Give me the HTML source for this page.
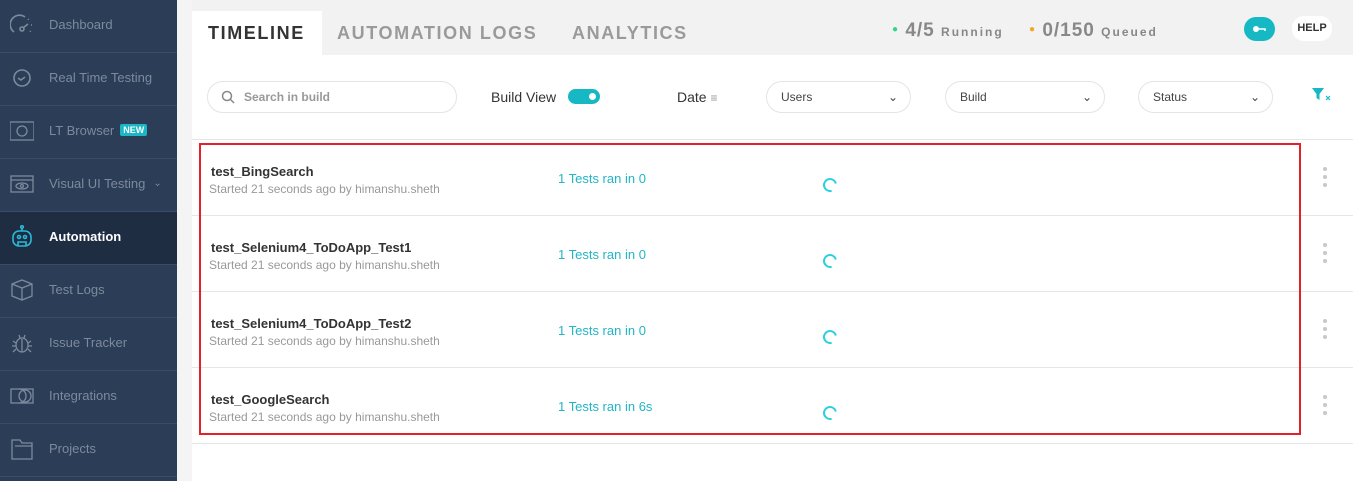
<!DOCTYPE html>
<html><head><meta charset="utf-8"><style>
*{box-sizing:border-box;margin:0;padding:0}
body{width:1353px;height:481px;overflow:hidden;font-family:"Liberation Sans",sans-serif;background:#f4f4f4;position:relative}
.sb{position:absolute;left:0;top:0;width:177px;height:481px;background:#2b3d57}
.it{position:absolute;left:0;width:177px;height:53px;border-bottom:1px solid #3b4d66;color:#7d8a9c;font-size:13px;display:flex;align-items:center;padding-left:49px;padding-bottom:4px}
.it.act{background:#1f2d43;color:#fff;font-weight:bold}
.ic{position:absolute;left:10px;top:13px;width:24px;height:24px}
.new{background:#1ab7c7;color:#fff;font-size:9px;font-weight:bold;padding:1px 3px;border-radius:2px;margin-left:6px}
.main{position:absolute;left:192px;top:0;right:0;height:481px;background:#fff}
.top{position:absolute;left:0;top:0;right:0;height:55px;background:#f2f2f2}
.tab{position:absolute;top:11px;height:44px;font-size:18px;font-weight:bold;letter-spacing:1.6px;color:#9a9a9a;line-height:44px}
.pill{position:absolute;top:81px;height:32px;border:1px solid #e4e4e4;border-radius:16px;font-size:12px;color:#444;line-height:30px;padding-left:14px}
.pill .ch{position:absolute;right:12px;top:0;font-size:12px}
.row{position:absolute;left:0;right:0;height:76px;border-bottom:1px solid #e6e6e6}
.nm{position:absolute;left:19px;top:24px;font-size:13px;color:#333;font-weight:bold}
.sub{position:absolute;left:17px;top:42px;font-size:12px;color:#999}
.ran{position:absolute;left:366px;top:31px;font-size:13px;color:#22b5c6}
.sp{position:absolute;left:631px;top:38px;width:14px;height:14px;border:2px solid #2ad0e0;border-radius:50%;border-right-color:transparent;transform:rotate(30deg)}
.kb{position:absolute;left:1131px;top:27px;width:4px}
.kb i{display:block;width:4px;height:4px;border-radius:2px;background:#c8c8c8;margin-bottom:4px}
</style></head><body>
<div class="sb">
 <div class="it" style="top:0"><svg class="ic" viewBox="0 0 24 24" fill="none" stroke="#7d8a9c" stroke-width="1.6"><path d="M4 19A9 9 0 0 1 15 4"/><circle cx="12" cy="16" r="2"/><path d="M13.5 14.5L18 11"/><path d="M18 6l1 1M21 12h1M20 18l1 1" stroke-dasharray="1 2"/></svg>Dashboard</div>
 <div class="it" style="top:53px"><svg class="ic" viewBox="0 0 24 24" fill="none" stroke="#7d8a9c" stroke-width="1.6"><circle cx="12" cy="12" r="8"/><path d="M8 12l3 2 4-3"/></svg>Real Time Testing</div>
 <div class="it" style="top:106px"><svg class="ic" viewBox="0 0 24 24" fill="none" stroke="#7d8a9c" stroke-width="1.3"><rect x="0" y="3" width="24" height="18"/><circle cx="12" cy="12" r="5"/></svg>LT Browser<span class="new">NEW</span></div>
 <div class="it" style="top:159px"><svg class="ic" viewBox="0 0 24 24" fill="none" stroke="#7d8a9c" stroke-width="1.3"><rect x="1" y="4" width="22" height="16"/><path d="M1 8h22"/><ellipse cx="12" cy="14" rx="6" ry="3"/><circle cx="12" cy="14" r="1.5"/></svg>Visual UI Testing <span style="margin-left:8px;font-size:10px">⌄</span></div>
 <div class="it act" style="top:212px"><svg class="ic" viewBox="0 0 24 24" fill="none" stroke="#2ab8d8" stroke-width="1.6"><circle cx="12" cy="2" r="1.3"/><path d="M12 3v3"/><rect x="3" y="6" width="18" height="15" rx="6"/><circle cx="9" cy="12" r="1.5"/><circle cx="15" cy="12" r="1.5"/><path d="M8 21v-4h8v4"/></svg>Automation</div>
 <div class="it" style="top:265px"><svg class="ic" viewBox="0 0 24 24" fill="none" stroke="#7d8a9c" stroke-width="1.3"><path d="M2 6l10-4 10 4v12l-10 4-10-4z M2 6l10 4 10-4 M12 10v12"/></svg>Test Logs</div>
 <div class="it" style="top:318px"><svg class="ic" viewBox="0 0 24 24" fill="none" stroke="#7d8a9c" stroke-width="1.3"><ellipse cx="12" cy="14" rx="6" ry="7"/><path d="M12 8v13M3 10l3 2M21 10l-3 2M2 15h4M22 15h-4M3 21l3-3M21 21l-3-3M9 4l1 3M15 4l-1 3"/></svg>Issue Tracker</div>
 <div class="it" style="top:371px"><svg class="ic" viewBox="0 0 24 24" fill="none" stroke="#7d8a9c" stroke-width="1.3"><rect x="1" y="5" width="22" height="14"/><circle cx="15" cy="12" r="6"/><path d="M9 5a7 7 0 0 1 0 14"/></svg>Integrations</div>
 <div class="it" style="top:424px"><svg class="ic" viewBox="0 0 24 24" fill="none" stroke="#7d8a9c" stroke-width="1.3"><path d="M2 3h8l2 3h10v16H2z M5 9h17"/></svg>Projects</div>
</div>
<div class="main">
 <div class="top"></div>
 <div class="tab" style="left:0;width:130px;background:#fff;color:#333;padding-left:16px">TIMELINE</div>
 <div class="tab" style="left:145px">AUTOMATION LOGS</div>
 <div class="tab" style="left:380px">ANALYTICS</div>
 <div style="position:absolute;left:700px;top:20px;font-size:19px;font-weight:bold;color:#888;letter-spacing:1px"><span style="color:#2ed68c;font-size:10px;vertical-align:4px">●</span> 4/5 <span style="font-size:12px;letter-spacing:2px">Running</span></div>
 <div style="position:absolute;left:837px;top:20px;font-size:19px;font-weight:bold;color:#888;letter-spacing:1px"><span style="color:#f6a623;font-size:10px;vertical-align:4px">●</span> 0/150 <span style="font-size:12px;letter-spacing:2px">Queued</span></div>
 <div style="position:absolute;left:1052px;top:17px;width:31px;height:24px;border-radius:12px;background:#16b8c4"><svg width="31" height="24" viewBox="0 0 31 24"><circle cx="12" cy="12" r="3" fill="#fff"/><path d="M14 12h7v2" stroke="#fff" stroke-width="1.5" fill="none"/></svg></div>
 <div style="position:absolute;left:1100px;top:16px;width:40px;height:25px;border-radius:12px;background:#fff;font-size:11px;font-weight:bold;color:#333;text-align:center;line-height:25px">HELP</div>
 <div class="pill" style="left:15px;width:250px;color:#999;padding-left:36px;font-weight:bold"><svg style="position:absolute;left:13px;top:8px" width="14" height="14" viewBox="0 0 14 14" fill="none" stroke="#888" stroke-width="1.5"><circle cx="6" cy="6" r="4.5"/><path d="M9.5 9.5L13 13"/></svg>Search in build</div>
 <div style="position:absolute;left:299px;top:89px;font-size:14px;color:#333">Build View</div>
 <div style="position:absolute;left:376px;top:89px;width:32px;height:15px;border-radius:8px;background:#16b8c4"><div style="position:absolute;right:4px;top:4px;width:7px;height:7px;border-radius:50%;background:#fff"></div></div>
 <div style="position:absolute;left:485px;top:89px;font-size:14px;color:#333">Date <span style="color:#999;font-size:12px">≡</span></div>
 <div class="pill" style="left:574px;width:145px">Users<span class="ch">⌄</span></div>
 <div class="pill" style="left:753px;width:160px">Build<span class="ch">⌄</span></div>
 <div class="pill" style="left:946px;width:135px">Status<span class="ch">⌄</span></div>
 <svg style="position:absolute;left:1120px;top:88px" width="22" height="14" viewBox="0 0 22 14"><path d="M0 0h12L7.5 6v6l-3-2V6z" fill="#16b8c4"/><path d="M14 8l4 4M18 8l-4 4" stroke="#16b8c4" stroke-width="1.2"/></svg>
 <div style="position:absolute;left:0;right:0;top:139px;border-top:1px solid #e6e6e6"></div>
 <div class="row" style="top:140px"><div class="nm">test_BingSearch</div><div class="sub">Started 21 seconds ago by himanshu.sheth</div><div class="ran">1 Tests ran in 0</div><div class="sp"></div><div class="kb"><i></i><i></i><i></i></div></div>
 <div class="row" style="top:216px"><div class="nm">test_Selenium4_ToDoApp_Test1</div><div class="sub">Started 21 seconds ago by himanshu.sheth</div><div class="ran">1 Tests ran in 0</div><div class="sp"></div><div class="kb"><i></i><i></i><i></i></div></div>
 <div class="row" style="top:292px"><div class="nm">test_Selenium4_ToDoApp_Test2</div><div class="sub">Started 21 seconds ago by himanshu.sheth</div><div class="ran">1 Tests ran in 0</div><div class="sp"></div><div class="kb"><i></i><i></i><i></i></div></div>
 <div class="row" style="top:368px"><div class="nm">test_GoogleSearch</div><div class="sub">Started 21 seconds ago by himanshu.sheth</div><div class="ran">1 Tests ran in 6s</div><div class="sp"></div><div class="kb"><i></i><i></i><i></i></div></div>
 <div style="position:absolute;left:7px;top:143px;width:1102px;height:292px;border:2px solid #e4202a"></div>
</div>
</body></html>
